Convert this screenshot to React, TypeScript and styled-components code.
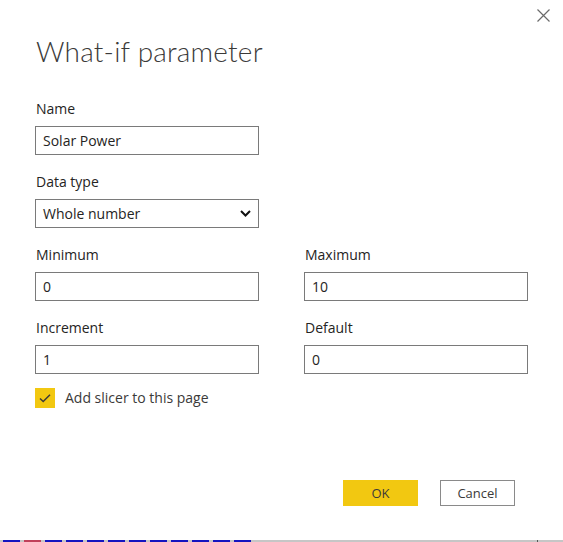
import React from "react";
import styled, { createGlobalStyle } from "styled-components";

const Global = createGlobalStyle`
  html, body { margin: 0; padding: 0; background: #ffffff; }
  body { font-family: "Open Sans", "Liberation Sans", sans-serif; color: #252423; }
  * { box-sizing: border-box; }
`;

const Page = styled.div`
  width: 563px;
  height: 542px;
  display: flex;
  flex-direction: column;
  overflow: hidden;
`;

const Dialog = styled.div`
  position: relative;
  flex: 1;
  display: flex;
  flex-direction: column;
  padding: 31px 48px 0 35px;
`;

const CloseButton = styled.button`
  position: absolute;
  top: 9px;
  right: 13px;
  width: 13px;
  height: 13px;
  padding: 0;
  border: none;
  background: transparent;
  display: flex;
  cursor: pointer;
`;

const Title = styled.h1`
  margin: 0 0 0 1px;
  font-family: Lato, "Open Sans", sans-serif;
  font-weight: 300;
  font-size: 28px;
  line-height: 40px;
  color: #3b3a39;
  letter-spacing: 0.2px;
`;

const Form = styled.div`
  margin-top: 28px;
  display: grid;
  grid-template-columns: 224px 224px;
  column-gap: 45px;
  row-gap: 17px;
`;

const Field = styled.div<{ $full?: boolean }>`
  display: flex;
  flex-direction: column;
  grid-column: ${(p) => (p.$full ? "1 / 3" : "auto")};
`;

const Label = styled.label`
  font-size: 14px;
  line-height: 20px;
  margin: 0 0 7px 1px;
  color: #252423;
`;

const TextInput = styled.input`
  width: 224px;
  height: 29px;
  border: 1px solid #7a7a7a;
  border-radius: 0;
  padding: 0 8px 1px 7px;
  font-family: "Open Sans", "Liberation Sans", sans-serif;
  font-size: 14px;
  color: #252423;
  background: #fff;
  outline: none;
`;

const Select = styled.div`
  width: 224px;
  height: 29px;
  border: 1px solid #7a7a7a;
  padding: 0 7px 1px 7px;
  display: flex;
  align-items: center;
  justify-content: space-between;
  font-size: 14px;
  color: #252423;
`;

const CheckRow = styled.div`
  margin-top: 14px;
  display: flex;
  align-items: center;
  gap: 10px;
`;

const CheckBox = styled.span`
  width: 20px;
  height: 20px;
  background: #f2c811;
  display: flex;
  align-items: center;
  justify-content: center;
`;

const CheckLabel = styled.span`
  font-size: 14px;
  line-height: 20px;
  color: #3b3a39;
`;

const Footer = styled.div`
  margin-top: 72px;
  display: flex;
  justify-content: flex-end;
  gap: 22px;
`;

const Button = styled.button<{ $primary?: boolean }>`
  width: 75px;
  height: 26px;
  padding: 0 0 1px;
  font-family: "Open Sans", "Liberation Sans", sans-serif;
  font-size: 13px;
  color: #3b3a39;
  background: ${(p) => (p.$primary ? "#f2c811" : "#ffffff")};
  border: 1px solid ${(p) => (p.$primary ? "#f2c811" : "#8a8a8a")};
  border-radius: 0;
  cursor: pointer;
`;

const Strip = styled.div`
  height: 2px;
  background: #c6c6c6;
  display: flex;
  gap: 4px;
  padding-left: 3px;
  position: relative;
`;

const StripSeg = styled.span<{ $red?: boolean }>`
  width: 17px;
  height: 2px;
  background: ${(p) => (p.$red ? "#c0405a" : "#1414c0")};
`;

const StripTick = styled.span`
  position: absolute;
  left: 537px;
  top: 0;
  width: 1px;
  height: 2px;
  background: #555;
`;

export default function App() {
  return (
    <>
      <Global />
      <Page>
        <Dialog>
          <CloseButton aria-label="Close">
            <svg width="13" height="13" viewBox="0 0 13 13">
              <path d="M0.5 0.5 L12.5 12.5 M12.5 0.5 L0.5 12.5" stroke="#6b6b6b" strokeWidth="1.2" />
            </svg>
          </CloseButton>
          <Title>What-if parameter</Title>
          <Form>
            <Field $full>
              <Label>Name</Label>
              <TextInput defaultValue="Solar Power" />
            </Field>
            <Field $full>
              <Label>Data type</Label>
              <Select>
                <span>Whole number</span>
                <svg width="11" height="7" viewBox="0 0 11 7">
                  <path d="M1 1 L5.5 5.5 L10 1" fill="none" stroke="#111" strokeWidth="2" />
                </svg>
              </Select>
            </Field>
            <Field>
              <Label>Minimum</Label>
              <TextInput defaultValue="0" />
            </Field>
            <Field>
              <Label>Maximum</Label>
              <TextInput defaultValue="10" />
            </Field>
            <Field>
              <Label>Increment</Label>
              <TextInput defaultValue="1" />
            </Field>
            <Field>
              <Label>Default</Label>
              <TextInput defaultValue="0" />
            </Field>
          </Form>
          <CheckRow>
            <CheckBox>
              <svg width="14" height="14" viewBox="0 0 14 14">
                <path d="M2 7.5 L5.2 10.5 L12 3.8" fill="none" stroke="#3b3a39" strokeWidth="1.5" />
              </svg>
            </CheckBox>
            <CheckLabel>Add slicer to this page</CheckLabel>
          </CheckRow>
          <Footer>
            <Button $primary>OK</Button>
            <Button>Cancel</Button>
          </Footer>
        </Dialog>
        <Strip>
          {Array.from({ length: 12 }).map((_, i) => (
            <StripSeg key={i} $red={i === 1} />
          ))}
          <StripTick />
        </Strip>
      </Page>
    </>
  );
}
